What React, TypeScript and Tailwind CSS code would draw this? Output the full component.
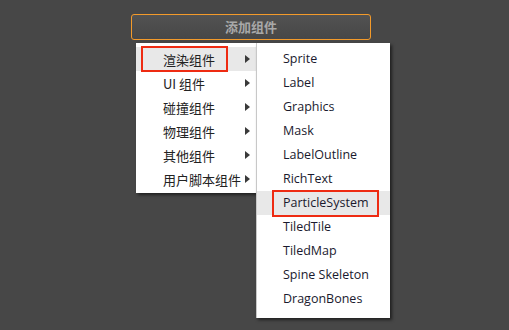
import React from 'react';

const categories = ['渲染组件', 'UI 组件', '碰撞组件', '物理组件', '其他组件', '用户脚本组件'];
const renderItems = [
  'Sprite',
  'Label',
  'Graphics',
  'Mask',
  'LabelOutline',
  'RichText',
  'ParticleSystem',
  'TiledTile',
  'TiledMap',
  'Spine Skeleton',
  'DragonBones',
];

const cjk = { fontFamily: '"Noto Sans CJK SC", "Noto Sans", sans-serif' };
const latin = { fontFamily: '"Open Sans", "Noto Sans CJK SC", sans-serif' };

const Arrow: React.FC = () => (
  <svg width="5" height="8" viewBox="0 0 5 8" className="shrink-0">
    <path d="M0 0 L5 4 L0 8 Z" fill="#3a3a3a" />
  </svg>
);

export default function App() {
  return (
    <div className="w-[509px] h-[330px] bg-[#474747] overflow-hidden pt-[14px] pl-[131px]">
      <button
        className="w-[240px] h-[26px] rounded-[3px] border border-[#f39a2a] bg-gradient-to-b from-[#525252] to-[#474747] text-[#a8a8a8] text-[13px] font-semibold flex items-center justify-center"
        style={cjk}
      >
        添加组件
      </button>

      <div className="flex items-start mt-[3px] ml-[5px]">
        {/* category menu */}
        <div className="w-[120px] h-[150px] bg-white pt-[4px] shadow-[2px_2px_3px_rgba(0,0,0,0.55)]">
          {categories.map((c, i) => (
            <div
              key={c}
              className={`h-[24px] flex items-center justify-between pr-[6px] ${i === 0 ? 'bg-[#e8e8e8]' : ''}`}
            >
              <span className="relative pl-[27px] pt-[1px] text-[13px] text-[#222]" style={cjk}>
                {i === 0 && (
                  <span className="absolute left-[5px] -top-[3px] w-[87px] h-[26px] border-2 border-[#ee2b12]" />
                )}
                {c}
              </span>
              <Arrow />
            </div>
          ))}
        </div>

        {/* render component submenu */}
        <div className="w-[134px] h-[275px] bg-white pt-[4px] border-l border-[#c8c8c8] shadow-[2px_2px_3px_rgba(0,0,0,0.55)]">
          {renderItems.map((item) => {
            const active = item === 'ParticleSystem';
            return (
              <div
                key={item}
                className={`h-[24px] flex items-center ${active ? 'bg-[#e8e8e8]' : ''}`}
              >
                <span className="relative pl-[26px] pt-[1px] text-[12.5px] text-[#1a1a2e]" style={latin}>
                  {active && (
                    <span className="absolute left-[15px] -top-[3px] w-[107px] h-[27px] border-2 border-[#ee2b12]" />
                  )}
                  {item}
                </span>
              </div>
            );
          })}
        </div>
      </div>
    </div>
  );
}
